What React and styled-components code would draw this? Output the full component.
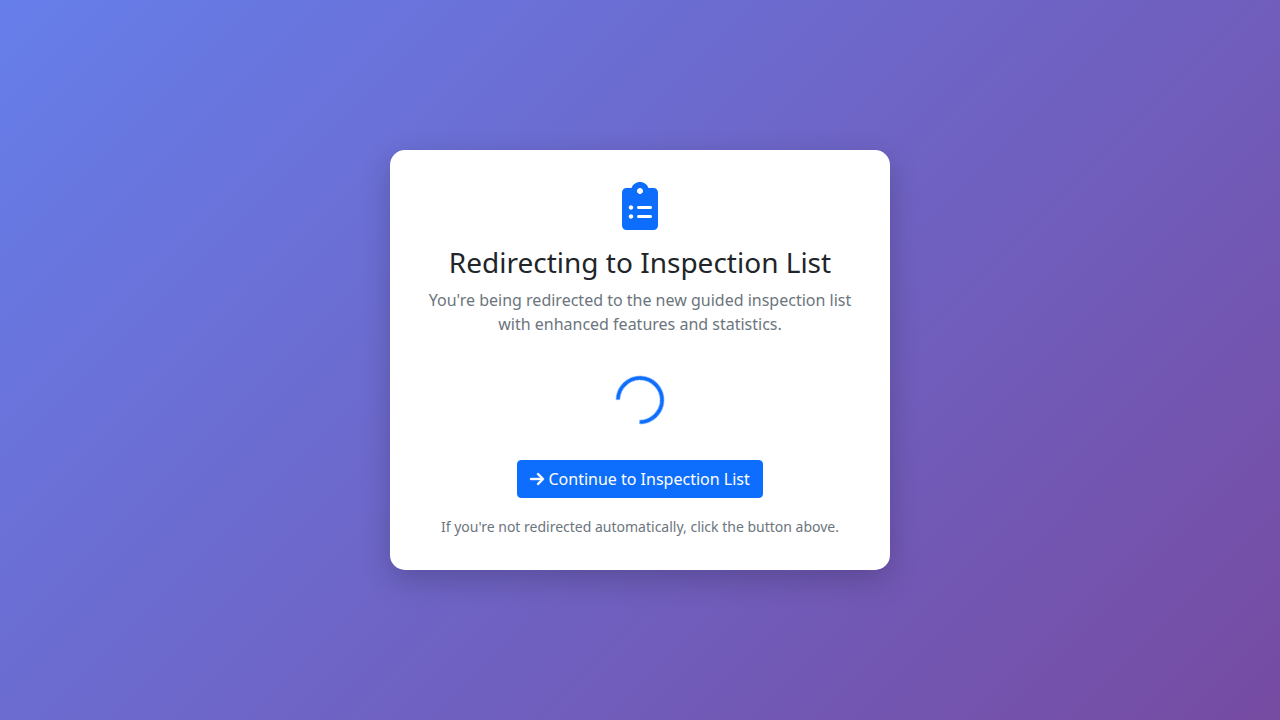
import React from "react";
import styled, { createGlobalStyle } from "styled-components";

const GlobalStyle = createGlobalStyle`
  *, *::before, *::after { box-sizing: border-box; }
  body {
    margin: 0;
    font-family: "Noto Sans", "Liberation Sans", Arial, sans-serif;
    font-size: 16px;
    line-height: 1.5;
    color: #212529;
  }
`;

const Page = styled.main`
  min-height: 100vh;
  display: flex;
  align-items: center;
  justify-content: center;
  background: linear-gradient(135deg, #667eea 0%, #764ba2 100%);
`;

const Card = styled.section`
  width: 500px;
  padding: 32px;
  border-radius: 15px;
  background: #fff;
  box-shadow: 0 10px 30px rgba(0, 0, 0, 0.2);
  text-align: center;
`;

const ClipboardIcon = styled.svg`
  display: block;
  width: 36px;
  height: 48px;
  margin: 0 auto 16px;
  fill: #0d6efd;
`;

const Title = styled.h1`
  margin: 0 0 8px;
  font-size: 28px;
  font-weight: 400;
  line-height: 1.2;
`;

const Message = styled.p`
  margin: 0;
  color: #6c757d;
`;

const Spinner = styled.div`
  width: 48px;
  height: 48px;
  margin: 40px auto 36px;
  border: 4px solid #0d6efd;
  border-right-color: transparent;
  border-radius: 50%;
  transform: rotate(136deg);
  will-change: transform;
`;

const ContinueLink = styled.a`
  display: inline-block;
  padding: 6px 12px;
  border: 1px solid #0d6efd;
  border-radius: 4px;
  background: #0d6efd;
  color: #fff;
  text-decoration: none;
  vertical-align: middle;
`;

const ArrowIcon = styled.svg`
  width: 14px;
  height: 16px;
  vertical-align: -2px;
  overflow: visible;
  fill: currentColor;
  stroke: currentColor;
  stroke-width: 12;
`;

const Hint = styled.p`
  margin: 17px 0 0;
  font-size: 14px;
  line-height: 24px;
  height: 23px;
  color: #6c757d;
`;

export default function App() {
  return (
    <>
      <GlobalStyle />
      <Page>
        <Card>
          <ClipboardIcon viewBox="0 0 384 512" aria-hidden="true">
            <path
              fillRule="evenodd"
              d="M336 64h-53.88C268.9 26.8 233.7 0 192 0S115.1 26.8 101.9 64H48C21.5 64 0 85.48 0 112v352C0 490.5 21.5 512 48 512h288c26.5 0 48-21.48 48-48v-352C384 85.48 362.5 64 336 64zM96 392c-13.25 0-24-10.75-24-24S82.75 344 96 344s24 10.75 24 24S109.3 392 96 392zM96 296c-13.25 0-24-10.75-24-24S82.75 248 96 248S120 258.8 120 272S109.3 296 96 296zM192 64c17.67 0 32 14.33 32 32c0 17.67-14.33 32-32 32S160 113.7 160 96C160 78.33 174.3 64 192 64zM304 384h-128C167.2 384 160 376.8 160 368C160 359.2 167.2 352 176 352h128c8.801 0 16 7.199 16 16C320 376.8 312.8 384 304 384zM304 288h-128C167.2 288 160 280.8 160 272C160 263.2 167.2 256 176 256h128C312.8 256 320 263.2 320 272C320 280.8 312.8 288 304 288z"
            />
          </ClipboardIcon>
          <Title>Redirecting to Inspection List</Title>
          <Message>
            You're being redirected to the new guided inspection list with enhanced features and statistics.
          </Message>
          <Spinner role="status" />
          <ContinueLink href="#">
            <ArrowIcon viewBox="0 0 448 512" aria-hidden="true">
              <path d="M438.6 278.6l-160 160C272.4 444.9 264.2 448 256 448s-16.38-3.125-22.62-9.375c-12.5-12.5-12.5-32.75 0-45.25L338.8 288H32C14.33 288 0 273.7 0 256S14.33 224 32 224h306.8l-105.4-105.4c-12.5-12.5-12.5-32.75 0-45.25s32.75-12.5 45.25 0l160 160C451.1 245.9 451.1 266.1 438.6 278.6z" />
            </ArrowIcon>{" "}
            Continue to Inspection List
          </ContinueLink>
          <Hint>If you're not redirected automatically, click the button above.</Hint>
        </Card>
      </Page>
    </>
  );
}
